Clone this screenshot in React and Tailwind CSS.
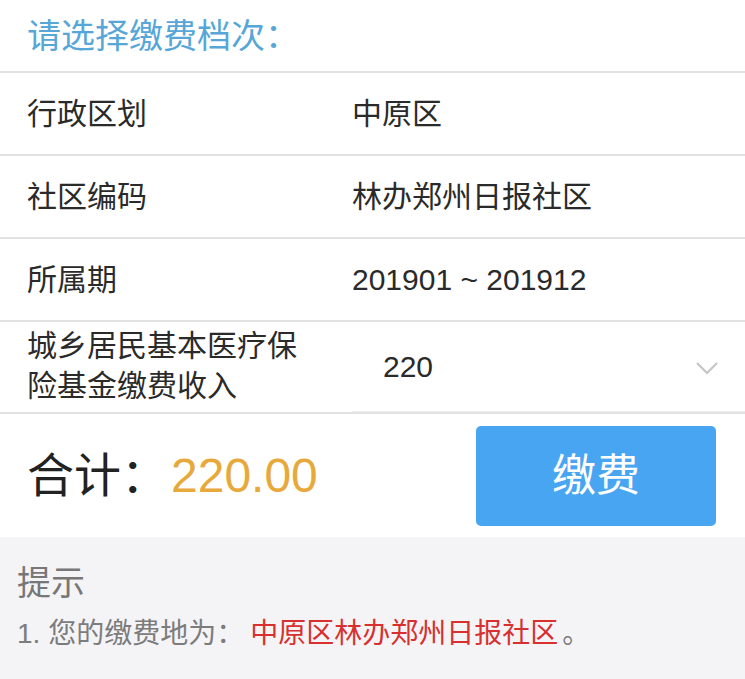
export default function App() {
  const font = { fontFamily: '"Liberation Sans", "Noto Sans CJK SC", sans-serif' };
  return (
    <div className="w-[745px] h-[679px] bg-[#f4f4f7] overflow-hidden" style={font}>
      <div className="bg-white">
        <div className="h-[73px] flex items-center pl-[27px] text-[34px] leading-none text-[#56a6d8] border-b-2 border-[#e2e2e2]">
          请选择缴费档次：
        </div>
        {[
          ["行政区划", "中原区"],
          ["社区编码", "林办郑州日报社区"],
          ["所属期", "201901 ~ 201912"],
        ].map(([k, v]) => (
          <div key={k} className="h-[83px] flex items-center border-b-2 border-[#e2e2e2] text-[30px] leading-none text-[#2a2a2a]">
            <div className="w-[352px] pl-[27px]">{k}</div>
            <div>{v}</div>
          </div>
        ))}
        <div className="h-[92px] flex border-b-2 border-[#e2e2e2] text-[30px] text-[#2a2a2a]">
          <div className="w-[352px] pl-[27px] flex flex-col justify-center leading-[40px] pb-[2px]">
            <div>城乡居民基本医疗保</div>
            <div>险基金缴费收入</div>
          </div>
          <div className="flex-1 flex items-center pl-[31px] pr-[26px] border-b border-[#ececec] leading-none">
            <div className="flex-1">220</div>
            <svg width="24" height="14" viewBox="0 0 24 14" className="mt-[2px]">
              <polyline points="2,2 12,12 22,2" fill="none" stroke="#c4c4c4" strokeWidth="2" />
            </svg>
          </div>
        </div>
        <div className="h-[123px] flex items-center justify-between pl-[27px] pr-[29px]">
          <div className="flex items-center leading-none">
            <span className="text-[47px] text-[#222]">合计：</span>
            <span className="ml-[3px] text-[48px] text-[#e8a93c]">220.00</span>
          </div>
          <button className="w-[240px] h-[100px] mt-[1px] rounded-[5px] bg-[#48a5f2] text-white text-[44px] leading-none flex items-center justify-center">
            缴费
          </button>
        </div>
      </div>
      <div className="pl-[17px] pt-[29px]">
        <div className="text-[34px] leading-none text-[#777]">提示</div>
        <div className="mt-[20px] text-[28px] leading-none text-[#7c7c7c] flex items-center">
          <span>1. 您的缴费地为：</span>
          <span className="ml-[6px] text-[28px] text-[#d8302e]">中原区林办郑州日报社区</span>
          <span className="ml-[4px]">。</span>
        </div>
      </div>
    </div>
  );
}
